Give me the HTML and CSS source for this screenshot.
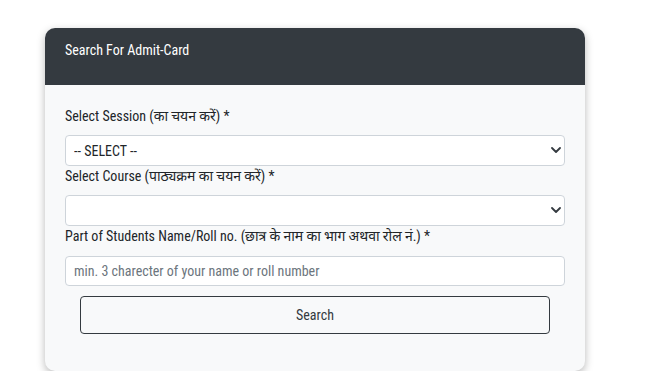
FILE: index.html
```html
<!DOCTYPE html>
<html lang="en">
<head>
<meta charset="utf-8">
<title>Search For Admit-Card</title>
<link rel="stylesheet" href="styles.css">
</head>
<body>
<div class="page">
  <div class="card">
    <div class="card-header">Search For Admit-Card</div>
    <form class="card-body">
      <label class="form-label" for="session">Select Session (का चयन करें) *</label>
      <div class="select-wrap">
        <select id="session" class="form-select">
          <option>-- SELECT --</option>
        </select>
        <svg class="chevron" viewBox="0 0 10 6" width="10" height="6"><path d="M1 1l4 4 4-4" fill="none" stroke="#343a40" stroke-width="1.8" stroke-linecap="round" stroke-linejoin="round"/></svg>
      </div>
      <label class="form-label" for="course">Select Course (पाठ्यक्रम का चयन करें) *</label>
      <div class="select-wrap">
        <select id="course" class="form-select">
          <option></option>
        </select>
        <svg class="chevron" viewBox="0 0 10 6" width="10" height="6"><path d="M1 1l4 4 4-4" fill="none" stroke="#343a40" stroke-width="1.8" stroke-linecap="round" stroke-linejoin="round"/></svg>
      </div>
      <label class="form-label form-label-last" for="name">Part of Students Name/Roll no. (छात्र के नाम का भाग अथवा रोल नं.) *</label>
      <input id="name" class="form-control" type="text" placeholder="min. 3 charecter of your name or roll number">
      <div class="actions">
        <button type="button" class="btn">Search</button>
      </div>
    </form>
  </div>
</div>
</body>
</html>
```

FILE: styles.css
```css
html, body {
  margin: 0;
  padding: 0;
  background: #ffffff;
}
body {
  font-family: "Roboto Condensed", "Liberation Sans Narrow", Roboto, "Noto Sans Devanagari", "Noto Sans", sans-serif;
  font-stretch: 85%;
  color: #212529;
}
.page {
  padding: 28px 0 0 45px;
}
.card {
  width: 540px;
  background: #f8f9fa;
  border-radius: 10px;
  box-shadow: 0 3px 8px rgba(0, 0, 0, 0.28);
  overflow: hidden;
}
.card-header {
  background: #343a40;
  color: #ffffff;
  font-size: 14px;
  line-height: 20px;
  height: 57px;
  box-sizing: border-box;
  padding: 12px 20px 0;
}
.card-body {
  display: flex;
  flex-direction: column;
  padding: 21px 20px 37px;
  margin: 0;
}
.form-label {
  font-size: 14px;
  line-height: 20px;
  margin-bottom: 9px;
}
.form-label-last {
  margin-bottom: 10px;
}
.select-wrap {
  position: relative;
}
.form-select, .form-control {
  display: block;
  width: 100%;
  box-sizing: border-box;
  height: 31px;
  border: 1px solid #ced4da;
  border-radius: 4px;
  background: #ffffff;
  font-family: inherit;
  font-stretch: 85%;
  font-size: 14px;
  color: #212529;
  padding: 0 8px;
  margin: 0;
  -webkit-appearance: none;
  appearance: none;
  outline: none;
}
.form-control {
  height: 30px;
}
.form-control::placeholder {
  color: #6c757d;
}
.chevron {
  position: absolute;
  right: 4px;
  top: 12px;
  pointer-events: none;
}
.actions {
  display: flex;
  padding: 10px 15px 0;
}
.btn {
  flex: 1;
  height: 38px;
  background: transparent;
  border: 1px solid #343a40;
  border-radius: 4px;
  color: #343a40;
  font-family: inherit;
  font-stretch: 85%;
  font-size: 14px;
}
```
